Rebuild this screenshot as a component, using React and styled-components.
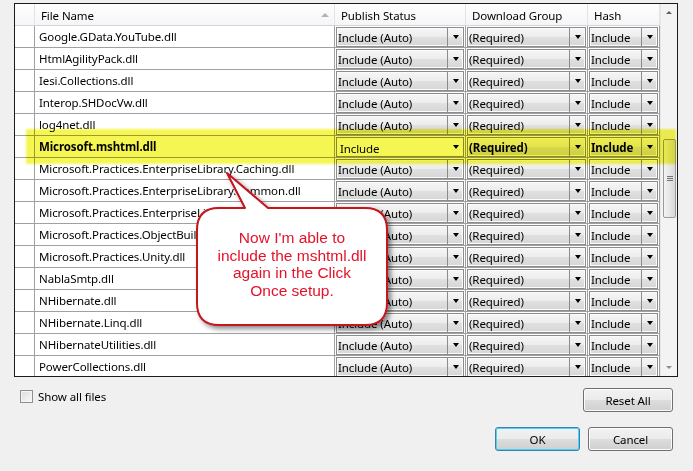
import React from 'react';
import styled, { createGlobalStyle } from 'styled-components';

const GlobalStyle = createGlobalStyle`
  html, body {
    margin: 0;
    padding: 0;
    background: #f0f0f0;
  }
  body {
    font-family: "Noto Sans", "Open Sans", sans-serif;
    font-size: 11.5px;
    letter-spacing: -0.1px;
    color: #000;
  }
`;

const Page = styled.div`
  position: relative;
  width: 693px;
  height: 471px;
  overflow: hidden;
  background: #f0f0f0;
`;

const Frame = styled.div`
  display: flex;
  margin: 3px 0 0 14px;
  width: 662px;
  height: 372px;
  border: 1px solid #1b1b1b;
  background: #fff;
  overflow: hidden;
`;

const Table = styled.div`
  display: grid;
  grid-template-columns: 20px 300px 131px 122px 72px;
  grid-auto-rows: 22px;
  align-content: start;
  width: 645px;
`;

const HeaderCell = styled.div`
  position: relative;
  display: flex;
  align-items: center;
  padding-left: ${(p) => (p.$pad ? '6px' : '0')};
  padding-top: 1px;
  background: linear-gradient(#ffffff, #f4f5f7);
  border-right: 1px solid #e3e4e6;
  border-bottom: 1px solid #d5d5d5;
  color: #000;
  white-space: nowrap;
`;

const SortArrow = styled.span`
  position: absolute;
  right: 5px;
  top: 9px;
  width: 0;
  height: 0;
  border-left: 4px solid transparent;
  border-right: 4px solid transparent;
  border-bottom: 4px solid #b4b4b4;
`;

const Cell = styled.div`
  display: flex;
  align-items: center;
  border-right: 1px solid #a0a0a0;
  border-bottom: 1px solid #a0a0a0;
  padding-left: ${(p) => (p.$text ? '4px' : '0')};
  font-weight: ${(p) => (p.$bold ? 'bold' : 'normal')};
  white-space: nowrap;
  overflow: hidden;
  background: #fff;
`;

const ComboCell = styled.div`
  border-right: 1px solid #a0a0a0;
  border-bottom: 1px solid #a0a0a0;
  padding: 1px 1px 0 1px;
  background: #fff;
`;

const Combo = styled.div`
  display: flex;
  height: 18px;
  border: 1px solid #8c8c8c;
  background: ${(p) =>
    p.$flat ? '#ffffff' : 'linear-gradient(#f6f6f6, #ececec 50%, #e0e0e0 51%, #d6d6d6)'};
  box-shadow: inset 0 0 0 1px ${(p) => (p.$flat ? '#fff' : '#fbfbfb')};
  font-weight: ${(p) => (p.$bold ? 'bold' : 'normal')};
`;

const ComboText = styled.div`
  flex: 1;
  display: flex;
  align-items: center;
  padding-left: ${(p) => (p.$flat ? '3px' : '1px')};
  padding-top: ${(p) => (p.$flat ? '2px' : '0')};
  white-space: nowrap;
  overflow: hidden;
`;

const ComboButton = styled.div`
  width: 15px;
  display: flex;
  align-items: center;
  justify-content: center;
  border-left: 1px solid ${(p) => (p.$flat ? 'transparent' : '#8c8c8c')};

  &::after {
    content: '';
    width: 0;
    height: 0;
    border-left: 3.5px solid transparent;
    border-right: 3.5px solid transparent;
    border-top: 4px solid #000;
  }
`;

const Scrollbar = styled.div`
  position: relative;
  width: 17px;
  background: #f3f3f3;
  border-left: 1px solid #e8e8e8;
  box-sizing: border-box;
`;

const ScrollArrow = styled.span`
  position: absolute;
  left: 5px;
  ${(p) => (p.$down ? 'bottom: 7px;' : 'top: 7px;')}
  width: 0;
  height: 0;
  border-left: 3.5px solid transparent;
  border-right: 3.5px solid transparent;
  ${(p) => (p.$down ? 'border-top: 3.5px solid #8d8d8d;' : 'border-bottom: 3.5px solid #606060;')}
`;

const Thumb = styled.div`
  position: absolute;
  left: 2px;
  top: 135px;
  width: 11px;
  height: 77px;
  border: 1px solid #9b9b9b;
  border-radius: 2px;
  background: linear-gradient(90deg, #f3f3f3, #e6e6e6 50%, #d9d9d9);
  display: flex;
  flex-direction: column;
  align-items: center;
  justify-content: center;
  gap: 1px;
`;

const Grip = styled.span`
  width: 6px;
  height: 1px;
  background: #707070;
`;

const Highlight = styled.div`
  position: absolute;
  left: 26px;
  top: 129px;
  width: 650px;
  height: 35px;
  background: #f6f64a;
  mix-blend-mode: multiply;
  filter: blur(1px);
  opacity: 0.95;
  pointer-events: none;
`;

const Callout = styled.div`
  position: absolute;
  left: 190px;
  top: 165px;
  width: 210px;
  height: 170px;
`;

const CalloutShape = styled.svg`
  position: absolute;
  inset: 0;
  overflow: visible;
`;

const CalloutText = styled.div`
  position: absolute;
  left: 7px;
  top: 64px;
  width: 190px;
  text-align: center;
  font-family: "Liberation Sans", Arial, sans-serif;
  font-size: 15.5px;
  letter-spacing: 0;
  line-height: 17.5px;
  color: #e4122a;
`;

const Footer = styled.div`
  display: flex;
  justify-content: space-between;
  align-items: flex-start;
  padding: 11px 20px 0 20px;
`;

const CheckLabel = styled.label`
  display: flex;
  align-items: center;
  gap: 5px;
  margin-top: 1px;
`;

const CheckBox = styled.span`
  width: 11px;
  height: 11px;
  border: 1px solid #8f8f8f;
  background: linear-gradient(135deg, #dcdcdc, #fafafa);
  box-shadow: inset 0 0 0 1px #f4f4f4;
`;

const Button = styled.button`
  width: ${(p) => p.$w || 85}px;
  height: 24px;
  border: 1px solid ${(p) => (p.$focus ? '#3c7fb1' : '#707070')};
  border-radius: 3px;
  background: linear-gradient(#f2f2f2, #ebebeb 50%, #dddddd 51%, #cfcfcf);
  box-shadow: inset 0 0 0 1px ${(p) => (p.$focus ? '#48d4f3' : '#fcfcfc')};
  font-family: "Noto Sans", "Open Sans", sans-serif;
  font-size: 11.5px;
  letter-spacing: -0.1px;
  color: #000;
  padding: 0;
`;

const ButtonRow = styled.div`
  display: flex;
  justify-content: flex-end;
  gap: 8px;
  padding: 15px 20px 0 0;
`;

const files = [
  'Google.GData.YouTube.dll',
  'HtmlAgilityPack.dll',
  'Iesi.Collections.dll',
  'Interop.SHDocVw.dll',
  'log4net.dll',
  'Microsoft.mshtml.dll',
  'Microsoft.Practices.EnterpriseLibrary.Caching.dll',
  'Microsoft.Practices.EnterpriseLibrary.Common.dll',
  'Microsoft.Practices.EnterpriseLibrary.Data.dll',
  'Microsoft.Practices.ObjectBuilder2.dll',
  'Microsoft.Practices.Unity.dll',
  'NablaSmtp.dll',
  'NHibernate.dll',
  'NHibernate.Linq.dll',
  'NHibernateUtilities.dll',
  'PowerCollections.dll',
];

const Select = ({ value, flat, bold }) => (
  <ComboCell>
    <Combo $flat={flat} $bold={bold}>
      <ComboText $flat={flat}>{value}</ComboText>
      <ComboButton $flat={flat} />
    </Combo>
  </ComboCell>
);

const App = () => {
  return (
    <Page>
      <GlobalStyle />
      <Frame>
        <Table>
          <HeaderCell />
          <HeaderCell $pad>
            File Name
            <SortArrow />
          </HeaderCell>
          <HeaderCell $pad>Publish Status</HeaderCell>
          <HeaderCell $pad>Download Group</HeaderCell>
          <HeaderCell $pad>Hash</HeaderCell>

          {files.map((name) => {
            const hot = name === 'Microsoft.mshtml.dll';
            return (
              <React.Fragment key={name}>
                <Cell />
                <Cell $text $bold={hot}>{name}</Cell>
                <Select value={hot ? 'Include' : 'Include (Auto)'} flat={hot} />
                <Select value="(Required)" bold={hot} />
                <Select value="Include" bold={hot} />
              </React.Fragment>
            );
          })}
        </Table>
        <Scrollbar>
          <ScrollArrow />
          <Thumb>
            <Grip />
            <Grip />
            <Grip />
          </Thumb>
          <ScrollArrow $down />
        </Scrollbar>
      </Frame>

      <Footer>
        <CheckLabel>
          <CheckBox />
          Show all files
        </CheckLabel>
        <Button $w={90}>Reset All</Button>
      </Footer>
      <ButtonRow>
        <Button $focus>OK</Button>
        <Button>Cancel</Button>
      </ButtonRow>

      <Highlight />

      <Callout>
        <CalloutShape width="210" height="170" viewBox="0 0 210 170">
          <defs>
            <filter id="shade" x="-20%" y="-20%" width="140%" height="140%">
              <feDropShadow dx="3" dy="3" stdDeviation="2.5" floodColor="#000" floodOpacity="0.45" />
            </filter>
          </defs>
          <path
            d="M29 43 H55 L37 8 L78 43 H175 Q197 43 197 65 V138 Q197 160 175 160 H29 Q7 160 7 138 V65 Q7 43 29 43 Z"
            fill="#ffffff"
            stroke="#c5121f"
            strokeWidth="2"
            strokeLinejoin="round"
            filter="url(#shade)"
          />
        </CalloutShape>
        <CalloutText>
          Now I'm able to
          <br />
          include the mshtml.dll
          <br />
          again in the Click
          <br />
          Once setup.
        </CalloutText>
      </Callout>
    </Page>
  );
};

export default App;
